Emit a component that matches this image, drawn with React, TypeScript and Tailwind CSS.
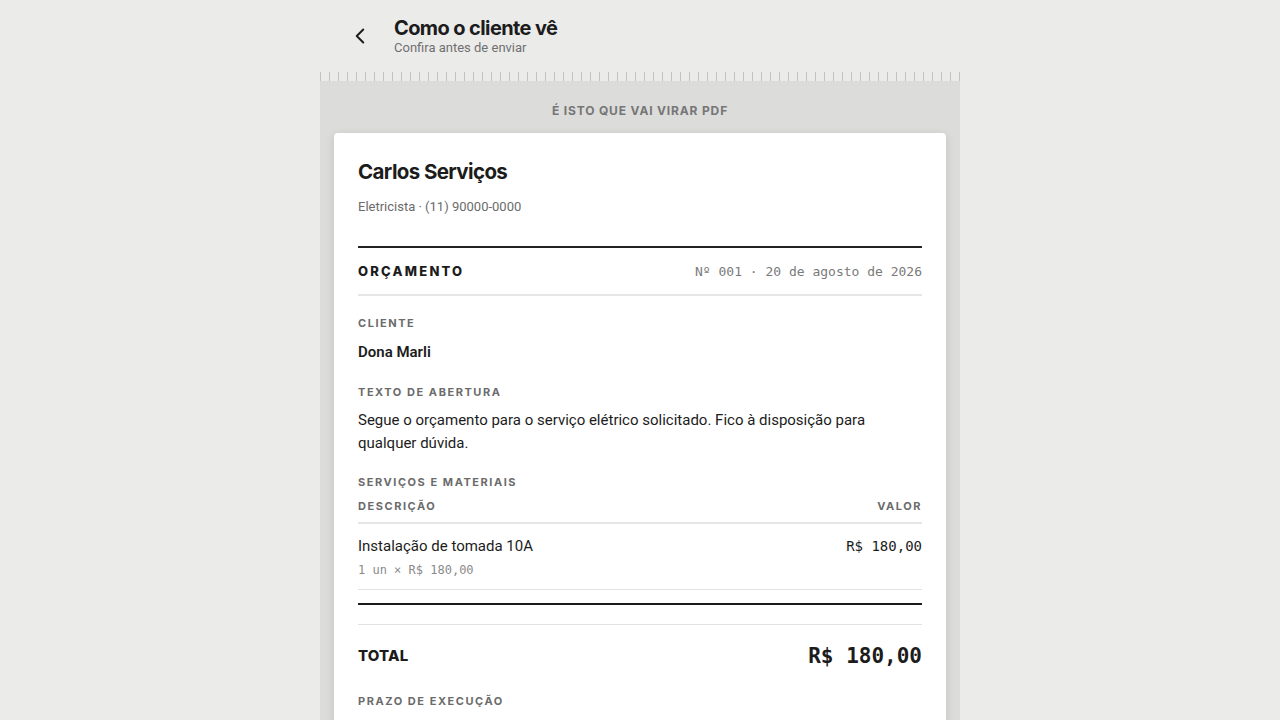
import { ChevronLeft } from 'lucide-react'

const head = "font-['Inter','Liberation_Sans',sans-serif]"
const body = "font-['Roboto','Liberation_Sans',sans-serif]"
const mono = "font-['DejaVu_Sans_Mono','Liberation_Mono',monospace]"

const Label = ({ children, className = '' }: { children: React.ReactNode; className?: string }) => (
  <div className={`${head} text-[11px] leading-4 font-bold tracking-[0.14em] text-[#6b6b6b] uppercase ${className}`}>
    {children}
  </div>
)

export default function App() {
  return (
    <div className={`min-h-screen bg-[#ebebea] ${body} text-[#1c1c1c]`}>
      <div className="mx-auto w-[640px]">
        {/* topo */}
        <header className="flex items-center gap-3.5 pl-5 pt-4 pb-4">
          <button className="flex h-10 w-10 items-center justify-center text-[#1c1c1c]" aria-label="Voltar">
            <ChevronLeft size={26} strokeWidth={1.8} />
          </button>
          <div>
            <h1 className={`${head} text-[20px] leading-6 font-bold tracking-[-0.03em]`}>Como o cliente vê</h1>
            <p className="text-[13px] leading-4 text-[#707070]">Confira antes de enviar</p>
          </div>
        </header>

        {/* régua */}
        <div className="h-[9px] bg-[repeating-linear-gradient(90deg,#c2c2c2_0_1px,transparent_1px_9px)]" />

        <div className="bg-[#dcdcdb] pt-[22px] px-[14px]">
          <div className={`${head} text-center text-[12px] leading-4 font-bold tracking-[0.07em] text-[#767676]`}>
            É ISTO QUE VAI VIRAR PDF
          </div>

          <div className="mt-[14px] rounded-[4px] bg-white px-6 pt-6 pb-10 shadow-[0_2px_10px_rgba(0,0,0,0.12)]">
            <h2 className={`${head} text-[20.5px] leading-[30px] font-bold tracking-[-0.03em]`}>Carlos Serviços</h2>
            <p className="mt-[10px] text-[13px] leading-5 text-[#6b6b6b]">Eletricista · (11) 90000-0000</p>

            <div className="mt-[29px] h-[2px] bg-[#222]" />
            <div className="flex h-[46px] items-center justify-between pt-px">
              <span className={`${head} text-[13px] font-extrabold tracking-[0.17em]`}>ORÇAMENTO</span>
              <span className={`${mono} text-[13px] text-[#7a7a7a]`}>Nº 001 · 20 de agosto de 2026</span>
            </div>
            <div className="h-[2px] bg-[#e6e6e6]" />

            <Label className="mt-[19px]">Cliente</Label>
            <div className="mt-[10px] text-[15px] leading-[22px] font-semibold">Dona Marli</div>

            <Label className="mt-[21px]">Texto de abertura</Label>
            <p className="mt-[9px] text-[15px] leading-[23px]">
              Segue o orçamento para o serviço elétrico solicitado. Fico à disposição para qualquer dúvida.
            </p>

            <Label className="mt-[19px]">Serviços e materiais</Label>
            <div className="mt-2 flex justify-between pb-2">
              <Label>Descrição</Label>
              <Label>Valor</Label>
            </div>
            <div className="h-[2px] bg-[#e6e6e6]" />

            <div className="pt-[11px] pb-[11px]">
              <div className="flex items-center justify-between">
                <span className="text-[15px] leading-[22px]">Instalação de tomada 10A</span>
                <span className={`${mono} text-[14px] font-medium`}>R$ 180,00</span>
              </div>
              <div className={`${mono} mt-[5px] text-[12px] leading-4 text-[#8a8a8a]`}>1 un × R$ 180,00</div>
            </div>
            <div className="h-px bg-[#e2e2e2]" />

            <div className="mt-[13px] h-[2px] bg-[#1a1a1a]" />
            <div className="mt-[19px] h-px bg-[#e2e2e2]" />

            <div className="flex items-center justify-between pt-[17px]">
              <span className={`${head} text-[15px] font-extrabold tracking-[0.01em]`}>TOTAL</span>
              <span className={`${mono} text-[21px] leading-7 font-semibold`}>R$ 180,00</span>
            </div>

            <Label className="mt-[23px]">Prazo de execução</Label>
          </div>
        </div>
      </div>
    </div>
  )
}
